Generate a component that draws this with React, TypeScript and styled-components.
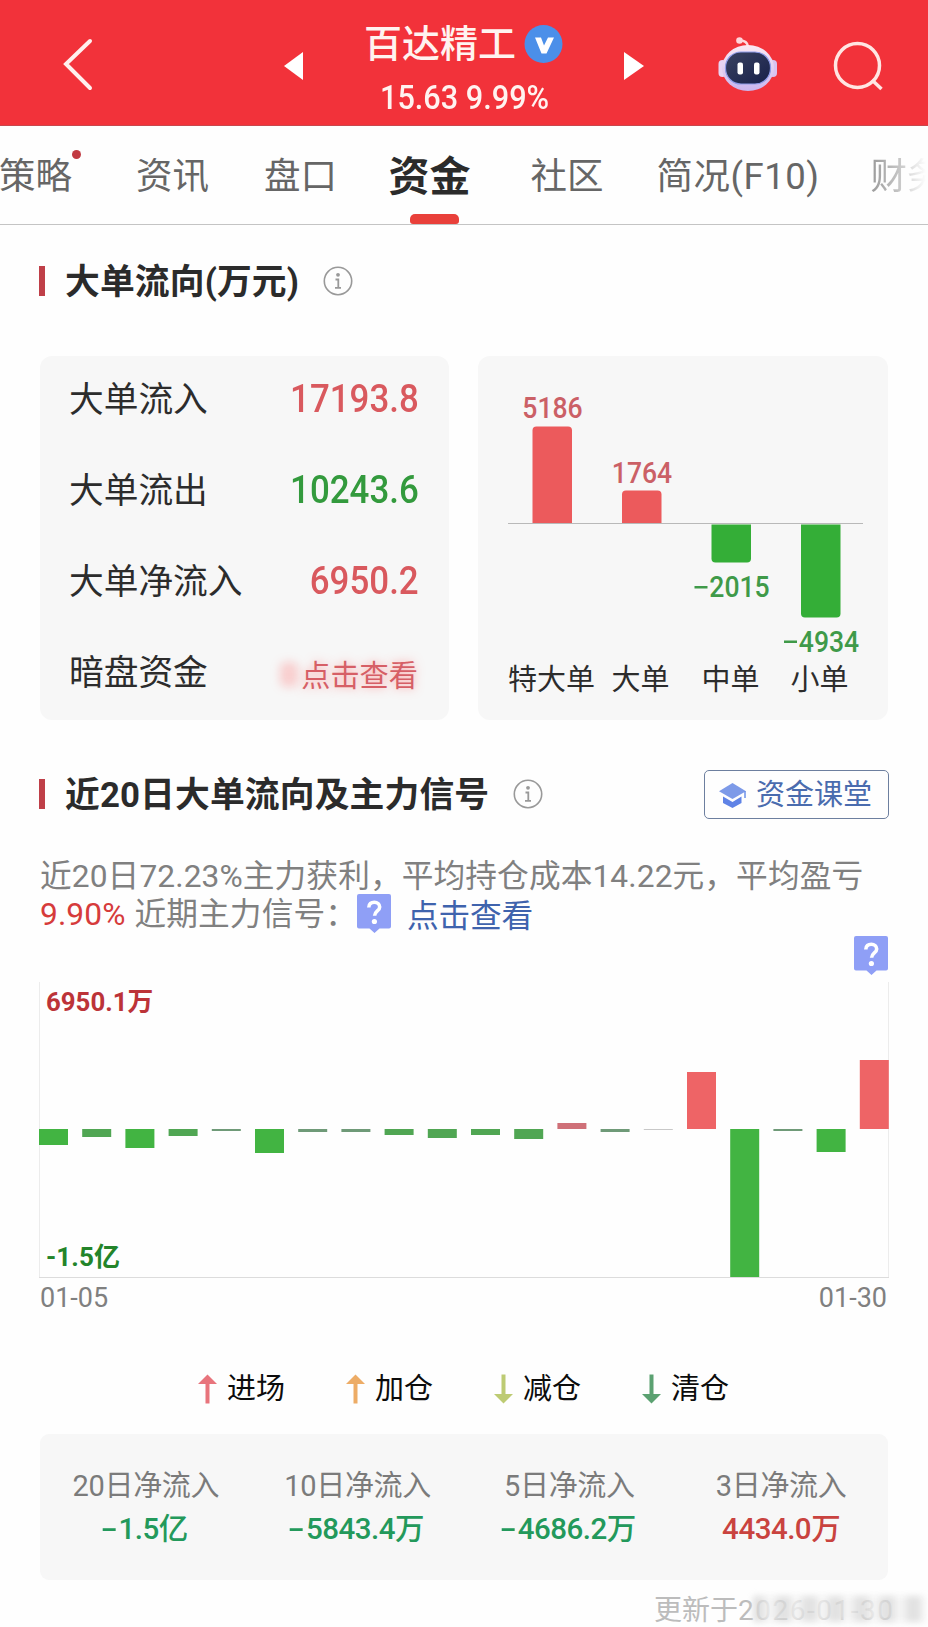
import React from "react";
import styled, { createGlobalStyle } from "styled-components";

const GlobalStyle = createGlobalStyle`
  * { box-sizing: border-box; }
  body {
    margin: 0;
    background: #fefefe;
    color: #2c2c2c;
    font-family: Roboto, "Noto Sans CJK SC", sans-serif;
  }
`;

const Page = styled.main`
  width: 928px;
  height: 1627px;
  overflow: hidden;
  display: flex;
  flex-direction: column;
`;

/* ---------- header ---------- */

const Header = styled.header`
  height: 126px;
  flex: none;
  display: flex;
  align-items: flex-start;
  background: #f2323a;
  border-bottom: 1px solid #c8474d;
  color: #fff3f0;
`;

const HeaderIcon = styled.svg<{ $left: number; $top: number }>`
  flex: none;
  display: block;
  margin: ${(p) => p.$top}px 0 0 ${(p) => p.$left}px;
`;

const StockBlock = styled.div`
  width: 201px;
  margin-left: 61px;
  padding-top: 22px;
`;

const StockName = styled.div`
  display: flex;
  align-items: center;
  gap: 8px;
  height: 44px;
  font-size: 38px;
  font-weight: 500;
  line-height: 44px;
  white-space: nowrap;
`;

const StockQuote = styled.div`
  width: max-content;
  margin: 13px 0 0 16px;
  font-size: 33.5px;
  line-height: 38px;
  font-weight: 500;
  white-space: nowrap;
  transform: scaleX(0.915);
  transform-origin: left;
`;

/* ---------- tabs ---------- */

const Tabs = styled.nav`
  height: 99px;
  flex: none;
  display: flex;
  border-bottom: 1px solid #c4c4c4;
  overflow: hidden;
`;

const Tab = styled.div<{ $gap: number; $active?: boolean; $faded?: boolean; $spacing?: number }>`
  position: relative;
  flex: none;
  margin-left: ${(p) => p.$gap}px;
  font-size: ${(p) => (p.$active ? 41 : 36.5)}px;
  font-weight: ${(p) => (p.$active ? 700 : 400)};
  letter-spacing: ${(p) => p.$spacing ?? 0}px;
  line-height: 102px;
  color: ${(p) => (p.$active ? "#2b2b2b" : "#666")};
  white-space: nowrap;
  ${(p) =>
    p.$faded &&
    `background: linear-gradient(90deg, #999 0, #c4c4c4 28px, #fefefe 56px);
     -webkit-background-clip: text; color: transparent;`}
`;

const TabDot = styled.i`
  position: absolute;
  top: 24px;
  right: -9px;
  width: 9px;
  height: 9px;
  border-radius: 50%;
  background: #c13a42;
`;

const TabUnderline = styled.i`
  position: absolute;
  left: 50%;
  bottom: 0;
  width: 49px;
  height: 10px;
  margin-left: -20px;
  border-radius: 5px 5px 3px 3px;
  background: #e9403a;
`;

/* ---------- sections ---------- */

const Content = styled.div`
  flex: 1;
  padding: 0 39px;
  display: flex;
  flex-direction: column;
`;

const SectionHead = styled.div<{ $top: number }>`
  display: flex;
  align-items: center;
  height: 50px;
  margin-top: ${(p) => p.$top}px;
`;

const SectionBar = styled.i`
  width: 6px;
  height: 30px;
  background: #bf3f48;
`;

const SectionTitle = styled.h2`
  margin: 0 24px 0 20px;
  padding-top: 2px;
  font-size: 34.8px;
  font-weight: 700;
  line-height: 50px;
  letter-spacing: 0.12px;
  color: #2b2b2b;
  white-space: nowrap;
`;

const CourseButton = styled.button`
  display: flex;
  align-items: center;
  gap: 10px;
  width: 185px;
  height: 49px;
  margin-left: auto;
  padding: 2px 0 0 14px;
  border: 1.5px solid #6d7f9f;
  border-radius: 5px;
  background: #fefefe;
  color: #4a6cae;
  font: 400 29px/46px Roboto, "Noto Sans CJK SC", sans-serif;
  white-space: nowrap;
`;

const Cards = styled.div`
  display: flex;
  gap: 29px;
  margin: 50px 0 0 1px;
`;

const Card = styled.div<{ $width: number }>`
  width: ${(p) => p.$width}px;
  height: 364px;
  border-radius: 12px;
  background: #f7f7f7;
`;

const FlowRow = styled.div`
  display: flex;
  justify-content: space-between;
  align-items: center;
  height: 91px;
  padding: 0 30px 9px 29px;
  font-size: 34.7px;
  white-space: nowrap;
`;

const FlowValue = styled.span<{ $color: string }>`
  padding-top: 4px;
  font-size: 39px;
  font-weight: 500;
  color: ${(p) => p.$color};
  transform: scaleX(0.895);
  transform-origin: right;
`;

const HiddenValue = styled.span`
  position: relative;
  margin-right: 1px;
  padding-top: 6px;
  font-size: 29.2px;
  color: #d65f66;
  text-shadow: 0 0 10px rgba(255, 90, 90, 0.5);
  &::before {
    content: "";
    position: absolute;
    left: -21px;
    top: 16px;
    width: 18px;
    height: 25px;
    border-radius: 6px;
    background: rgba(255, 90, 90, 0.26);
    filter: blur(5px);
  }
`;

/* ---------- summary ---------- */

const Summary = styled.p`
  margin: 39px 0 0 1px;
  font-size: 31.7px;
  line-height: 38px;
  letter-spacing: 0.1px;
  color: #808080;
  white-space: nowrap;
`;

const SummaryLine = styled.span`
  display: flex;
  height: 38px;
`;

const Loss = styled.span`
  margin-right: 9px;
  color: #d63b3b;
`;

const SignalLink = styled.a`
  margin-left: 16px;
  padding-top: 2px;
  letter-spacing: -0.2px;
  color: #3f63ad;
`;

const BubbleSlot = styled.span<{ $left: number; $top: number }>`
  display: flex;
  margin: ${(p) => p.$top}px 0 0 ${(p) => p.$left}px;
`;

const ChartWrap = styled.div`
  margin-top: 3px;
`;

const Dates = styled.div`
  display: flex;
  justify-content: space-between;
  padding: 0 2px 0 1px;
  height: 38px;
  font-size: 27px;
  line-height: 40px;
  color: #808080;
`;

const Legend = styled.div`
  display: flex;
  gap: 61px;
  margin: 51px 0 0 159px;
  height: 44px;
`;

const LegendItem = styled.span`
  display: flex;
  align-items: center;
  gap: 10px;
  width: 87px;
  font-size: 29px;
  line-height: 44px;
  color: #0c0c0c;
  white-space: nowrap;
`;

const Totals = styled.div`
  display: grid;
  grid-template-columns: repeat(4, 1fr);
  flex: none;
  height: 146px;
  margin: 23px 1px 0;
  padding: 31px 1px 0 0;
  border-radius: 9px;
  background: #f7f7f7;
  text-align: center;
`;

const TotalLabel = styled.div`
  font-size: 29px;
  line-height: 43px;
  letter-spacing: -0.3px;
  color: #7b7b7b;
`;

const TotalValue = styled.div<{ $up: boolean }>`
  font-size: 29.5px;
  line-height: 43px;
  font-weight: 500;
  letter-spacing: -0.5px;
  color: ${(p) => (p.$up ? "#c9433f" : "#23995b")};
`;

const Minus = styled.span`
  display: inline-block;
  margin-right: 5px;
  transform: scaleX(1.7);
`;

const Updated = styled.div`
  display: flex;
  justify-content: flex-end;
  margin: 11px -36px 0 0;
  font-size: 28px;
  line-height: 40px;
  color: #bcbcbc;
  white-space: nowrap;
`;

const SmearedDate = styled.span`
  position: relative;
  width: 187px;
  letter-spacing: 1.5px;
  &::after {
    content: "";
    position: absolute;
    left: 15px;
    top: 5px;
    width: 172px;
    height: 26px;
    background: repeating-linear-gradient(90deg, rgba(218, 218, 218, 0.8) 0 9px, rgba(242, 242, 242, 0.82) 14px 20px, rgba(218, 218, 218, 0.8) 26px);
    filter: blur(3px);
  }
`;

/* ---------- drawings ---------- */

const InfoIcon = () => (
  <svg width="30" height="30" viewBox="0 0 30 30" fill="none" stroke="#999">
    <circle cx="15" cy="15" r="13.7" strokeWidth="1.6" />
    <circle cx="15" cy="8.8" r="1.9" fill="#999" stroke="none" />
    <path d="M12.5 13.5h2.8v8M12 21.8h6" strokeWidth="1.8" />
  </svg>
);

const Bubble = () => (
  <svg width="34" height="39" viewBox="0 0 34 39">
    <path d="M2 0h30a2 2 0 0 1 2 2v30.500a2 2 0 0 1-2 2H22.500l-5 4.500-5-4.500H2a2 2 0 0 1-2-2V2a2 2 0 0 1 2-2z" fill="#8f9ff6" />
    <path d="M11.800 13.500c0-4 2.500-5.300 5.500-5.300s5.400 2 5.400 4.800c0 4-5.100 4-5.100 8.800" fill="none" stroke="#fff" strokeWidth="3.600" />
    <circle cx="17.400" cy="27.500" r="2.600" fill="#fff" />
  </svg>
);

const CapIcon = () => (
  <svg width="27" height="25" viewBox="0 0 27 25">
    <path d="M13.500 0 27 8.200 13.500 16 0 8.200z" fill="#7d9ae8" />
    <path d="M26 8v7" stroke="#6d90e8" strokeWidth="1.500" />
    <path d="M4 13.500 13.500 19 22.500 13.500V20l-9 5L4 20z" fill="#5f83e6" />
  </svg>
);

const Robot = () => (
  <HeaderIcon $left={74} $top={36} width="60" height="57" viewBox="0 0 60 57">
    <defs>
      <linearGradient id="shell" x1="0" y1="0" x2="0" y2="1">
        <stop offset="0" stopColor="#fbe9f3" />
        <stop offset="1" stopColor="#c9b5ee" />
      </linearGradient>
      <linearGradient id="face" x1="0" y1="0" x2="1" y2="1">
        <stop offset="0" stopColor="#3a4260" />
        <stop offset="1" stopColor="#17204a" />
      </linearGradient>
    </defs>
    <path d="M21 4.500q8-.5 9 6" fill="none" stroke="#ffd9dd" strokeWidth="2.500" />
    <circle cx="21.500" cy="4.500" r="3.300" fill="#ffd5da" />
    <rect x=".5" y="24" width="8" height="17" rx="4" fill="#e8d3f2" />
    <rect x="51" y="24" width="8" height="17" rx="4" fill="#d9c2f0" />
    <ellipse cx="30" cy="32" rx="26" ry="23" fill="url(#shell)" />
    <rect x="7.500" y="16" width="45" height="32" rx="15.500" fill="url(#face)" stroke="#8d9be8" strokeWidth="1.200" />
    <rect x="19.500" y="26.500" width="5.500" height="12" rx="2" fill="#fff" />
    <rect x="36" y="26.500" width="5.500" height="12" rx="2" fill="#fff" />
  </HeaderIcon>
);

const Arrow = ({ color, down }: { color: string; down?: boolean }) => (
  <svg width="19" height="30" viewBox="0 0 19 30">
    <g transform={down ? "rotate(180 9.5 15)" : undefined} fill={color}>
      <path d="M9.500 .5 19 10H0z" />
      <rect x="7.500" y="9" width="4" height="20.500" />
    </g>
  </svg>
);

/* ---------- data ---------- */

const flows = [
  { label: "大单流入", value: "17193.8", color: "#d9595e" },
  { label: "大单流出", value: "10243.6", color: "#339a3d" },
  { label: "大单净流入", value: "6950.2", color: "#d9595e" },
];

// size is the bar's length measured from the axis.
const orders = [
  { name: "特大单", nameX: 73.5, value: "5186", x: 54.5, size: 97, up: true, labelY: 62 },
  { name: "大单", nameX: 162.5, value: "1764", x: 144, size: 33, up: true, labelY: 126.5 },
  { name: "中单", nameX: 252.5, value: "2015", x: 233.5, size: 38, up: false, labelY: 241 },
  { name: "小单", nameX: 341.5, value: "4934", x: 323, size: 93, up: false, labelY: 295.5 },
];

const daily = [-16, -8, -19, -7, -2, -24, -3, -3, -6, -9, -6, -10, 6, -3, -1, 57, -148, -2, -23, 69];

const legend = [
  { name: "进场", color: "#e8747c", down: false },
  { name: "加仓", color: "#edac66", down: false },
  { name: "减仓", color: "#bdcb73", down: true },
  { name: "清仓", color: "#5ba171", down: true },
];

const totals = [
  { label: "20日净流入", value: "1.5亿", up: false },
  { label: "10日净流入", value: "5843.4万", up: false },
  { label: "5日净流入", value: "4686.2万", up: false },
  { label: "3日净流入", value: "4434.0万", up: true },
];

const AXIS = 167.5;

const OrderChart = () => (
  <svg width="410" height="364" viewBox="0 0 410 364">
    {orders.map((o) => {
      const y = o.up ? AXIS - o.size : AXIS + 1;
      const r = 4;
      const d = o.up
        ? `M${o.x} ${AXIS}V${y + r}q0-${r} ${r}-${r}h31.500q${r} 0 ${r} ${r}V${AXIS}z`
        : `M${o.x} ${y}v${o.size - r}q0 ${r} ${r} ${r}h31.500q${r} 0 ${r}-${r}V${y}z`;
      return (
        <g key={o.name}>
          <path d={d} fill={o.up ? "#ec5a5c" : "#34ae37"} />
          {!o.up && <rect x={o.x - 17} y={o.labelY - 11} width="13" height="2.500" fill="#3f9a49" />}
          <text
            transform={`translate(${o.up ? o.x + 20 : o.x + 28} ${o.labelY}) scale(.9 1)`}
            textAnchor="middle"
            fontSize="29.500"
            fontWeight="500"
            fill={o.up ? "#cb6066" : "#3f9a49"}
          >
            {o.value}
          </text>
          <text x={o.nameX} y="334" textAnchor="middle" fontSize="29" fill="#2c2c2c">
            {o.name}
          </text>
        </g>
      );
    })}
    <path d={`M30 ${AXIS}H385`} stroke="#b9b9b9" />
  </svg>
);

const dailyColor = (v: number) => {
  if (v > 0) return v < 10 ? "#cf7078" : "#ee6466";
  if (v > -2) return "#c8c8c8";
  if (v > -5) return "#6f9a78";
  return v > -11 ? "#50a653" : "#42b442";
};

const DailyChart = () => (
  <svg width="850" height="300" viewBox="0 0 850 300" style={{ display: "block" }}>
    <path d="M.5 4V300M849.500 4V300" stroke="#ececec" />
    <path d="M0 299.500H850" stroke="#dcdcdc" />
    {daily.map((v, i) => (
      <rect key={i} x={i * 43.2} y={v > 0 ? 151 - v : 151} width="29" height={Math.abs(v)} fill={dailyColor(v)} />
    ))}
    <text x="7" y="33" fontSize="25.800" fontWeight="700" fill="#bc3338">6950.1万</text>
    <text x="7" y="287.500" fontSize="26" fontWeight="700" letterSpacing=".1" fill="#23842a">-1.5亿</text>
  </svg>
);

export default function App() {
  return (
    <Page>
      <GlobalStyle />
      <Header>
        <HeaderIcon $left={62} $top={37} width="32" height="54" viewBox="0 0 32 54">
          <path d="M28 4 4 27 28 51" fill="none" stroke="#fff0ee" strokeWidth="4" strokeLinecap="round" />
        </HeaderIcon>
        <HeaderIcon $left={190} $top={52} width="19" height="28" viewBox="0 0 19 28">
          <path d="M0 14 19 0v28z" fill="#fff" />
        </HeaderIcon>
        <StockBlock>
          <StockName>
            百达精工
            <svg width="39" height="39" viewBox="0 0 39 39">
              <circle cx="19.500" cy="19" r="19" fill="#4b8fe9" />
              <path d="M11 12.500h6l3 8 4-8h6l-7.500 16h-5z" fill="#fff" />
            </svg>
          </StockName>
          <StockQuote>15.63 9.99%</StockQuote>
        </StockBlock>
        <HeaderIcon $left={59} $top={52} width="20" height="28" viewBox="0 0 20 28">
          <path d="M20 14 0 0v28z" fill="#fff" />
        </HeaderIcon>
        <Robot />
        <HeaderIcon $left={55} $top={40} width="52" height="52" viewBox="0 0 52 52" fill="none" stroke="#ffe6e3" strokeWidth="3.500">
          <circle cx="24.500" cy="25.500" r="22" />
          <path d="M39 40l9.500 9" />
        </HeaderIcon>
      </Header>

      <Tabs>
        <Tab $gap={-1}>策略<TabDot /></Tab>
        <Tab $gap={64}>资讯</Tab>
        <Tab $gap={55}>盘口</Tab>
        <Tab $gap={51.5} $active>资金<TabUnderline /></Tab>
        <Tab $gap={60}>社区</Tab>
        <Tab $gap={53} $spacing={0.5}>简况(F10)</Tab>
        <Tab $gap={51} $faded>财务</Tab>
      </Tabs>

      <Content>
        <SectionHead $top={31}>
          <SectionBar />
          <SectionTitle>大单流向(万元)</SectionTitle>
          <InfoIcon />
        </SectionHead>

        <Cards>
          <Card $width={409}>
            {flows.map((f) => (
              <FlowRow key={f.label}>
                {f.label}
                <FlowValue $color={f.color}>{f.value}</FlowValue>
              </FlowRow>
            ))}
            <FlowRow>
              暗盘资金
              <HiddenValue>点击查看</HiddenValue>
            </FlowRow>
          </Card>
          <Card $width={410}>
            <OrderChart />
          </Card>
        </Cards>

        <SectionHead $top={49}>
          <SectionBar />
          <SectionTitle>近20日大单流向及主力信号</SectionTitle>
          <InfoIcon />
          <CourseButton>
            <CapIcon />
            资金课堂
          </CourseButton>
        </SectionHead>

        <Summary>
          <SummaryLine>近20日72.23%主力获利，平均持仓成本14.22元，平均盈亏</SummaryLine>
          <SummaryLine>
            <Loss>9.90%</Loss>近期主力信号：
            <BubbleSlot $left={0} $top={-2}><Bubble /></BubbleSlot>
            <SignalLink>点击查看</SignalLink>
          </SummaryLine>
        </Summary>

        <BubbleSlot $left={815} $top={2}><Bubble /></BubbleSlot>
        <ChartWrap>
          <DailyChart />
        </ChartWrap>
        <Dates>
          <span>01-05</span>
          <span>01-30</span>
        </Dates>

        <Legend>
          {legend.map((l) => (
            <LegendItem key={l.name}>
              <Arrow color={l.color} down={l.down} />
              {l.name}
            </LegendItem>
          ))}
        </Legend>

        <Totals>
          {totals.map((t) => (
            <div key={t.label}>
              <TotalLabel>{t.label}</TotalLabel>
              <TotalValue $up={t.up}>
                {!t.up && <Minus>-</Minus>}
                {t.value}
              </TotalValue>
            </div>
          ))}
        </Totals>

        <Updated>
          更新于<SmearedDate>2026-01-30</SmearedDate>
        </Updated>
      </Content>
    </Page>
  );
}
